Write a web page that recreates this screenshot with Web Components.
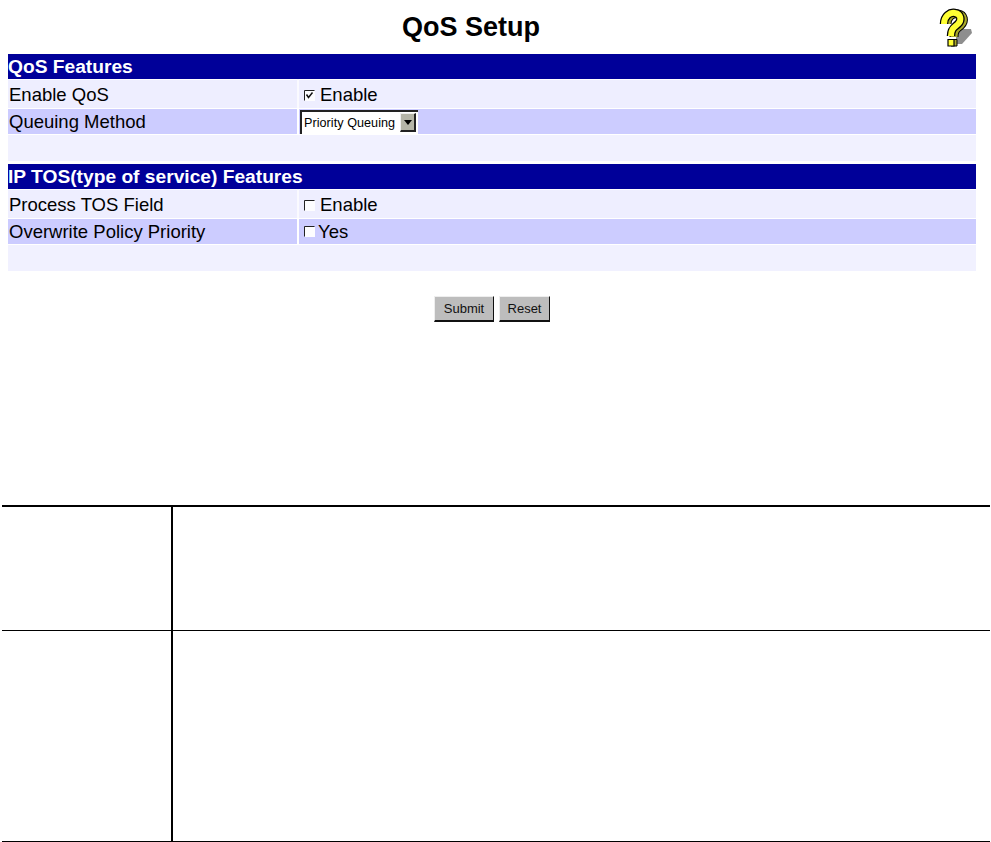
<!DOCTYPE html>
<html><head><meta charset="utf-8"><title>QoS Setup</title>
<style>
html,body{margin:0;background:#fff;font-family:"Liberation Sans",Arial,sans-serif;color:#000}
</style></head><body>
<qos-page>
  <qos-title slot="title">QoS Setup</qos-title>
  <qos-section slot="form" heading="QoS Features">
    <qos-row label="Enable QoS" tone="light"><qos-check checked>Enable</qos-check></qos-row>
    <qos-row label="Queuing Method" tone="dark"><qos-select>Priority Queuing</qos-select></qos-row>
  </qos-section>
  <qos-section slot="form" heading="IP TOS(type of service) Features">
    <qos-row label="Process TOS Field" tone="light"><qos-check>Enable</qos-check></qos-row>
    <qos-row label="Overwrite Policy Priority" tone="dark"><qos-check tight>Yes</qos-check></qos-row>
  </qos-section>
  <qos-actions slot="actions"><qos-button style="width:60px">Submit</qos-button><qos-button style="width:51px">Reset</qos-button></qos-actions>
  <qos-table slot="table"></qos-table>
</qos-page>
<script>
function def(name, css, html, extra){
  customElements.define(name, class extends HTMLElement{
    constructor(){super();this.attachShadow({mode:'open'}).innerHTML='<style>'+css+'</style>'+html;}
    connectedCallback(){ if(extra) extra(this); }
  });
}
def('qos-page',':host{display:block;width:991px;height:842px;overflow:hidden}',
 '<slot name="title"></slot><slot name="form"></slot><slot name="actions"></slot><slot name="table"></slot>');
def('qos-title',
 ':host{display:flex;height:54px;box-sizing:border-box;padding-right:15px;padding-left:8px}.t{flex:1;text-align:center;font-size:27px;font-weight:bold;line-height:54px}.i{width:42px;flex:none;padding-top:8px;box-sizing:border-box;display:flex;justify-content:flex-end}svg{display:block}',
 `<div class="t"><slot></slot></div><div class="i"><svg width="40" height="40" viewBox="0 0 40 40">
 <path d="M20 21 L35 21 L36 25 L26 36 L20 36 Z" fill="#8e8e8e"/>
 <g fill="none">
 <path d="M11 16 C11 8 17 5 22 6 C28 7 29 13 25 17 C22 20 18 21 18 29" stroke="#000" stroke-width="9"/>
 <path d="M11 16 C11 8 17 5 22 6 C28 7 29 13 25 17 C22 20 18 21 18 29" stroke="#a8a82a" stroke-width="7"/>
 <path d="M8 16 C8 8 14 4 19 5 C25 6 26 12 22 16 C19 19 15 20 15 28" stroke="#000" stroke-width="8.5"/>
 <path d="M8 16 C8 8 14 4 19 5 C25 6 26 12 22 16 C19 19 15 20 15 28" stroke="#ffff33" stroke-width="6"/>
 </g>
 <path d="M15 31.5 H21 V38 H15 Z" fill="#a8a82a" stroke="#000"/>
 <path d="M12 31.5 H18 V38 H12 Z" fill="#ffff33" stroke="#000" stroke-width="1.2"/></svg></div>`);
def('qos-section',
 ':host{display:block;margin:0 15px 3px 8px}.h{background:#000099;color:#fff;font-weight:bold;font-size:19.2px;height:25px;line-height:25px}.b{height:26px;background:#f1f1ff;margin-top:1px}',
 '<div class="h" id="h"></div><slot></slot><div class="b"></div>',
 el=>{el.shadowRoot.getElementById('h').textContent=el.getAttribute('heading');});
def('qos-row',
 ':host{display:grid;grid-template-columns:289px 1fr;column-gap:2px;font-size:18.5px}:host([tone=light]){background:linear-gradient(#fff 1px,#eeeeff 1px);height:29px;margin-bottom:1px}:host([tone=light]) .l,:host([tone=light]) .v{padding-top:3px}:host([tone=dark]){height:25px}.l,.v{box-sizing:border-box;display:flex;align-items:center;height:100%}.l{padding-left:1px}:host([tone=dark]) .l,:host([tone=dark]) .v{background:#ccccff}:host([tone=light]) .l{box-shadow:2px 0 0 #fafaff}.v{padding-left:1px}',
 '<div class="l" id="l"></div><div class="v"><slot></slot></div>',
 el=>{el.shadowRoot.getElementById('l').textContent=el.getAttribute('label');});
def('qos-check',
 ':host{display:flex;align-items:center;gap:5px;padding-left:4px}:host([tight]){gap:3px}svg{display:block;flex:none}',
 `<svg width="11" height="11" viewBox="0 0 11 11"><rect x="1" y="1" width="10" height="10" fill="#fdfdff"/><path d="M.5 10.5V.5H10.5" fill="none" stroke="#222"/><path id="m" d="M2.5 4.5L4.5 7.5L8.5 2.5" fill="none" stroke="#111" stroke-width="1.5"/></svg><slot></slot>`,
 el=>{ if(!el.hasAttribute('checked')) el.shadowRoot.getElementById('m').remove(); });
def('qos-select',
 ':host{display:flex;align-items:center;box-sizing:border-box;width:118px;height:24px;background:#fff;border-left:2px solid #222;border-top:2px solid #222;font-size:12.6px;letter-spacing:.05px;padding-left:2px}.t{flex:1;white-space:nowrap}.a{width:16px;height:19px;background:#b5b5a8;box-sizing:border-box;border-top:1px solid #eee;border-left:1px solid #eee;border-right:2px solid #222;border-bottom:2px solid #222;display:flex;align-items:center;justify-content:center;margin-right:2px}.a i{display:block;border:4px solid transparent;border-top:5px solid #000;border-bottom:0}',
 '<div class="t"><slot></slot></div><div class="a"><i></i></div>');
def('qos-actions',
 ':host{display:flex;gap:5px;padding-left:434px;margin-top:25px;height:26px}','<slot></slot>');
def('qos-button',
 ':host{display:flex;align-items:center;justify-content:center;box-sizing:border-box;height:26px;background:#bdbdbd;font-size:13px;border-top:1px solid #eee;border-left:1px solid #eee;border-right:1px solid #111;border-bottom:2px solid #111;color:#111}',
 '<slot></slot>');
def('qos-table',
 ':host{display:grid;grid-template-columns:171px 1fr;grid-template-rows:123px 211px;margin:183px 1px 0 2px;border-top:2px solid #000;border-bottom:1px solid #000}.a{border-right:2px solid #000}.r{border-top:1px solid #000}',
 '<div class="a"></div><div class="b"></div><div class="a r"></div><div class="b r"></div>');
</script>
</body></html>
